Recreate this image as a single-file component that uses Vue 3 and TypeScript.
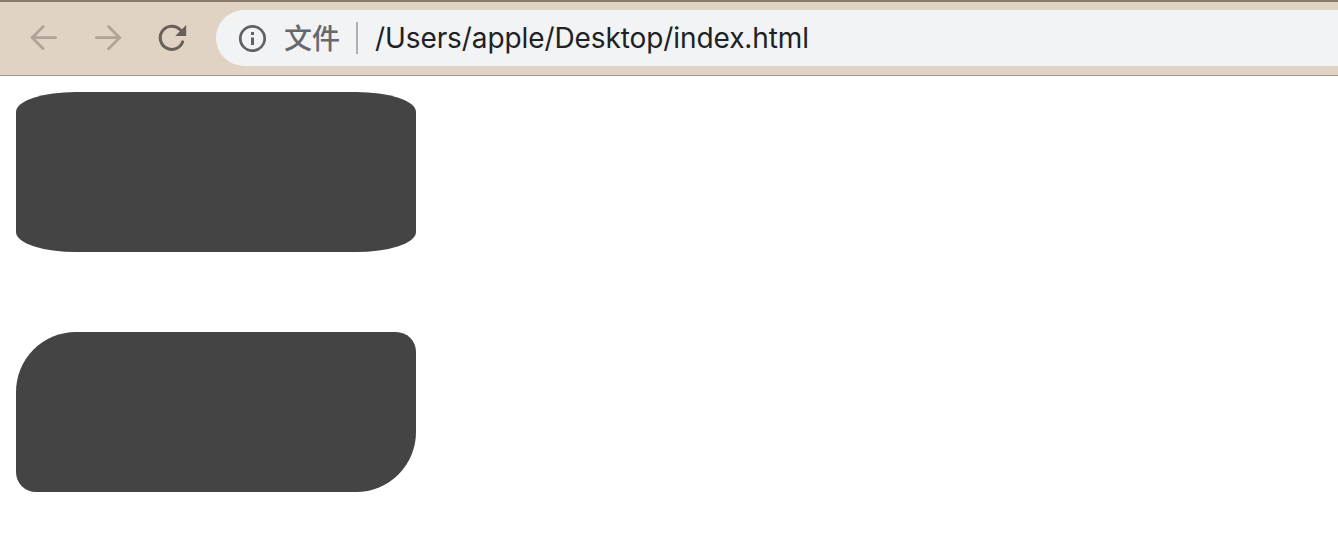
<template>
  <div class="browser">
    <header class="toolbar">
      <nav class="nav">
        <svg class="icon faded" viewBox="0 0 32 32">
          <path d="M27.600 15.700H5M15.200 4.500L4.200 15.700l11 11" />
        </svg>
        <svg class="icon faded" viewBox="0 0 32 32">
          <path d="M4.400 15.700H27M16.500 4.500l11.200 11.200-11.200 11" />
        </svg>
        <svg class="icon reload" viewBox="0 0 32 32">
          <path d="M26.700 19.800A11.600 11.600 0 1 1 24.200 7.700L26 9.500" />
          <path class="solid" d="M30.200 3v11H19.200z" />
        </svg>
      </nav>
      <div class="address">
        <svg class="info" viewBox="0 0 28 28">
          <circle cx="14.500" cy="14.500" r="12.200" />
          <path class="solid" d="M13 8h3v3h-3zM13 13.500h3v7.500h-3z" />
        </svg>
        <span class="scheme">文件</span>
        <span class="divider"></span>
        <span class="url">{{ url }}</span>
      </div>
    </header>
    <main class="page">
      <div v-for="shape in shapes" :key="shape" :class="['box', shape]"></div>
    </main>
  </div>
</template>

<script setup lang="ts">
const url: string = "/Users/apple/Desktop/index.html";
const shapes: string[] = ["elliptical", "diagonal"];
</script>

<style>
body {
  background: #fff;
  overflow: hidden;
}
</style>

<style scoped>
.browser {
  height: 538px;
  background: #fff;
}
.toolbar {
  box-sizing: border-box;
  height: 76px;
  display: flex;
  align-items: flex-start;
  padding: 8px 0 0 28px;
  background: #e1d3c4;
  border-top: 2px solid #8b7a69;
  border-bottom: 1px solid #a6948b;
}
.nav {
  display: flex;
  gap: 32px;
  height: 56px;
  align-items: center;
}
.icon {
  width: 32px;
  height: 32px;
  fill: none;
  stroke: #b0a499;
  stroke-width: 2.8;
  stroke-linecap: round;
}
.icon.reload {
  stroke: #686059;
  stroke-width: 3;
}
.icon .solid {
  fill: #686059;
  stroke: none;
}
.address {
  box-sizing: border-box;
  flex: 1;
  height: 56px;
  margin-left: 28px;
  padding-left: 22px;
  display: flex;
  align-items: center;
  border-radius: 28px 0 0 28px;
  background: #f1f3f5;
  white-space: nowrap;
}
.info {
  width: 28px;
  height: 28px;
  fill: none;
  stroke: #606266;
  stroke-width: 2.8;
}
.info .solid {
  fill: #606266;
  stroke: none;
}
.scheme {
  width: 56px;
  margin-left: 18px;
  padding-bottom: 2px;
  font-family: "Noto Sans CJK SC", sans-serif;
  font-size: 28px;
  font-weight: 500;
  line-height: 54px;
  color: #66686c;
}
.divider {
  width: 2px;
  height: 32px;
  margin-left: 16px;
  background: #aeb0b3;
}
.url {
  margin-left: 17px;
  font-family: Inter, sans-serif;
  font-size: 28px;
  line-height: 56px;
  letter-spacing: -0.09px;
  color: #202124;
}
.page {
  display: flex;
  flex-direction: column;
  gap: 80px;
  padding: 16px;
}
.box {
  width: 400px;
  height: 160px;
  background: #444;
}
.elliptical {
  border-radius: 60px / 20px;
}
.diagonal {
  border-radius: 60px 20px;
}
</style>
